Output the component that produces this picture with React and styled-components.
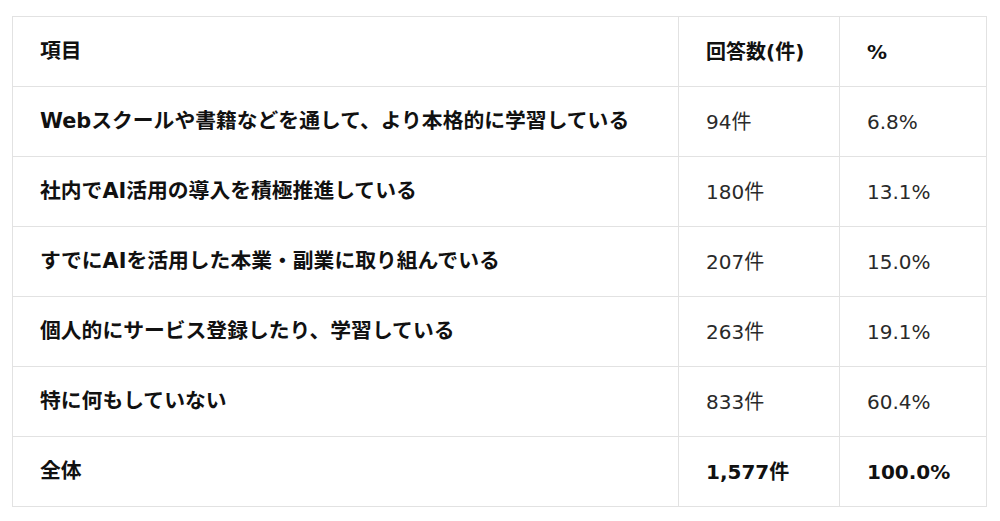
import React from "react";
import styled, { createGlobalStyle } from "styled-components";

const GlobalStyle = createGlobalStyle`
  html, body {
    margin: 0;
    padding: 0;
    background: #fff;
  }
  body {
    font-family: "DejaVu Sans", "Noto Sans CJK JP", sans-serif;
    color: #1a1a1a;
  }
`;

const Page = styled.div`
  padding: 16px 14px 0 12px;
`;

const Table = styled.table`
  width: 974px;
  border-collapse: collapse;
  table-layout: fixed;
`;

const Cell = styled.td`
  height: 69px;
  padding: 0 0 0 27px;
  border: 1px solid #e2e2e2;
  font-size: ${(p) => (p.$label ? "20.8px" : "20px")};
  font-weight: ${(p) => (p.$bold ? 700 : 400)};
  color: ${(p) => (p.$bold ? "#111" : "#2a2a2a")};
  vertical-align: middle;
  white-space: nowrap;
  line-height: 1;
`;

const rows = [
  ["Webスクールや書籍などを通して、より本格的に学習している", "94件", "6.8%"],
  ["社内でAI活用の導入を積極推進している", "180件", "13.1%"],
  ["すでにAIを活用した本業・副業に取り組んでいる", "207件", "15.0%"],
  ["個人的にサービス登録したり、学習している", "263件", "19.1%"],
  ["特に何もしていない", "833件", "60.4%"],
];

export default function App() {
  return (
    <>
      <GlobalStyle />
      <Page>
        <Table>
          <colgroup>
            <col style={{ width: 666 }} />
            <col style={{ width: 161 }} />
            <col style={{ width: 147 }} />
          </colgroup>
          <tbody>
            <tr>
              <Cell $bold $label>項目</Cell>
              <Cell $bold>回答数(件)</Cell>
              <Cell $bold>%</Cell>
            </tr>
            {rows.map((r, i) => (
              <tr key={i}>
                <Cell $bold $label>{r[0]}</Cell>
                <Cell>{r[1]}</Cell>
                <Cell>{r[2]}</Cell>
              </tr>
            ))}
            <tr>
              <Cell $bold $label>全体</Cell>
              <Cell $bold>1,577件</Cell>
              <Cell $bold>100.0%</Cell>
            </tr>
          </tbody>
        </Table>
      </Page>
    </>
  );
}
